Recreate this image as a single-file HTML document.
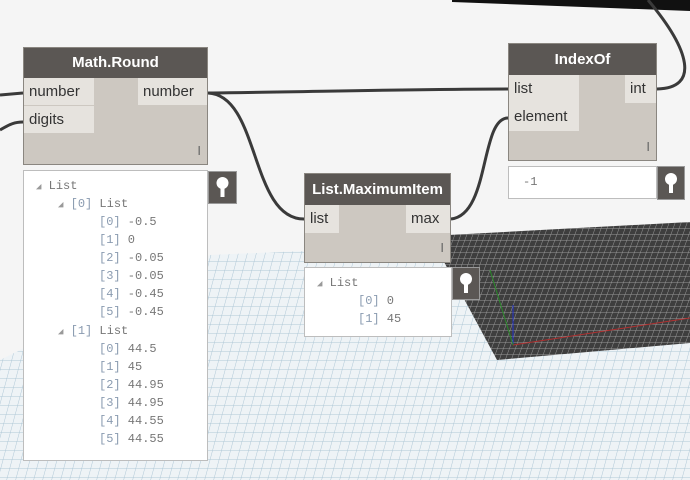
<!DOCTYPE html>
<html><head><meta charset="utf-8"><style>
body{margin:0;width:690px;height:480px;overflow:hidden;background:#f5f5f5;position:relative;font-family:"Liberation Sans",sans-serif}
.abs{position:absolute}
.node{position:absolute;background:#cdc8c1;border:1px solid #8a8680;box-sizing:border-box}
.hd{background:#5b5754;color:#fff;font-weight:bold;font-size:15px;text-align:center;box-sizing:border-box}
.port{position:absolute;background:#e6e3de;color:#333;font-size:15px;line-height:27px;padding:0 5px;box-sizing:border-box;height:27px}
.lac{position:absolute;color:#666;font-size:13px}
.prev{position:absolute;background:#fff;border:1px solid #bdbdbd;box-sizing:border-box;font-family:"Liberation Mono",monospace;font-size:12px;color:#777}
.prev div{position:absolute;white-space:pre}
.b{color:#8a9bb0}
.tri{color:#999;font-size:9px}
.pin{position:absolute;background:#5b5754;border:1px solid #999;box-sizing:border-box}
</style></head><body>
<svg class="abs" style="left:0;top:0" width="690" height="480">
<defs>
<pattern id="g" width="9" height="9" patternUnits="userSpaceOnUse" patternTransform="skewX(-15)">
<rect width="9" height="9" fill="#eef3f6"/><path d="M0 0H9M0 0V9" stroke="#aec7d6" stroke-width="1"/>
</pattern>
<pattern id="d" width="6" height="6" patternUnits="userSpaceOnUse" patternTransform="skewX(-20)">
<rect width="6" height="6" fill="#3e3e3e"/><path d="M0 0H6M0 0V6" stroke="#9a9a9a" stroke-width="1"/>
</pattern>
</defs>
<polygon points="0,360 120,300 210,255 440,245 690,225 690,480 0,480" fill="url(#g)"/>
<polygon points="430,236 690,222 690,343 497,360" fill="url(#d)"/>
<line x1="513" y1="305" x2="513" y2="345" stroke="#2233cc" stroke-width="1"/>
<line x1="513" y1="345" x2="690" y2="318" stroke="#b03030" stroke-width="1"/>
<line x1="490" y1="270" x2="513" y2="345" stroke="#2a8a2a" stroke-width="1"/>
<polygon points="452,0 690,0 690,11 452,2" fill="#111"/>
<g fill="none" stroke="#3a3a3a" stroke-width="3">
<path d="M0 95 L23 93"/>
<path d="M0 130 C10 124 15 122 23 122"/>
<path d="M208 93 C300 92 420 89 508 89"/>
<path d="M208 93 C260 95 250 219 304 219"/>
<path d="M451 219 C490 215 480 118 508 118"/>
<path d="M648 0 C690 50 700 88 657 89"/>
</g>
</svg>

<div class="node" style="left:23px;top:47px;width:185px;height:118px">
<div class="hd" style="height:30px;line-height:30px">Math.Round</div>
<div class="port" style="left:0;top:30px;width:70px">number</div>
<div class="port" style="left:0;top:58px;width:70px">digits</div>
<div class="port" style="right:0;top:30px;width:69px">number</div>
<div class="lac" style="right:6px;top:95px">I</div>
</div>
<div class="prev" style="left:23px;top:170px;width:185px;height:291px">
<div style="left:12px;top:8px"><span class="tri">◢</span> List</div>
<div style="left:34px;top:26px"><span class="tri">◢</span> <span class="b">[0]</span> List</div>
<div style="left:75px;top:44px"><span class="b">[0]</span> -0.5</div>
<div style="left:75px;top:62px"><span class="b">[1]</span> 0</div>
<div style="left:75px;top:80px"><span class="b">[2]</span> -0.05</div>
<div style="left:75px;top:98px"><span class="b">[3]</span> -0.05</div>
<div style="left:75px;top:116px"><span class="b">[4]</span> -0.45</div>
<div style="left:75px;top:134px"><span class="b">[5]</span> -0.45</div>
<div style="left:34px;top:153px"><span class="tri">◢</span> <span class="b">[1]</span> List</div>
<div style="left:75px;top:171px"><span class="b">[0]</span> 44.5</div>
<div style="left:75px;top:189px"><span class="b">[1]</span> 45</div>
<div style="left:75px;top:207px"><span class="b">[2]</span> 44.95</div>
<div style="left:75px;top:225px"><span class="b">[3]</span> 44.95</div>
<div style="left:75px;top:243px"><span class="b">[4]</span> 44.55</div>
<div style="left:75px;top:261px"><span class="b">[5]</span> 44.55</div>
</div>
<div class="pin" style="left:208px;top:171px;width:29px;height:33px"><svg width="27" height="31"><circle cx="13.5" cy="11" r="6" fill="#fff"/><rect x="11.5" y="15" width="4" height="10" fill="#fff"/></svg></div>

<div class="node" style="left:304px;top:173px;width:147px;height:90px">
<div class="hd" style="height:31px;line-height:31px">List.MaximumItem</div>
<div class="port" style="left:0;top:31px;width:34px;height:28px;line-height:28px">list</div>
<div class="port" style="right:0;top:31px;width:44px;height:28px;line-height:28px">max</div>
<div class="lac" style="right:6px;top:66px">I</div>
</div>
<div class="prev" style="left:304px;top:267px;width:148px;height:70px">
<div style="left:12px;top:8px"><span class="tri">◢</span> List</div>
<div style="left:53px;top:26px"><span class="b">[0]</span> 0</div>
<div style="left:53px;top:44px"><span class="b">[1]</span> 45</div>
</div>
<div class="pin" style="left:452px;top:267px;width:28px;height:33px"><svg width="26" height="31"><circle cx="13" cy="11" r="6" fill="#fff"/><rect x="11" y="15" width="4" height="10" fill="#fff"/></svg></div>

<div class="node" style="left:508px;top:43px;width:149px;height:118px">
<div class="hd" style="height:31px;line-height:31px">IndexOf</div>
<div class="port" style="left:0;top:31px;width:70px;height:28px;line-height:28px">list</div>
<div class="port" style="left:0;top:59px;width:70px;height:28px;line-height:28px">element</div>
<div class="port" style="right:0;top:31px;width:31px;height:28px;line-height:28px">int</div>
<div class="lac" style="right:6px;top:95px">I</div>
</div>
<div class="prev" style="left:508px;top:166px;width:149px;height:33px">
<div style="left:14px;top:8px">-1</div>
</div>
<div class="pin" style="left:657px;top:166px;width:28px;height:34px"><svg width="26" height="32"><circle cx="13" cy="12" r="6" fill="#fff"/><rect x="11" y="16" width="4" height="10" fill="#fff"/></svg></div>
</body></html>
